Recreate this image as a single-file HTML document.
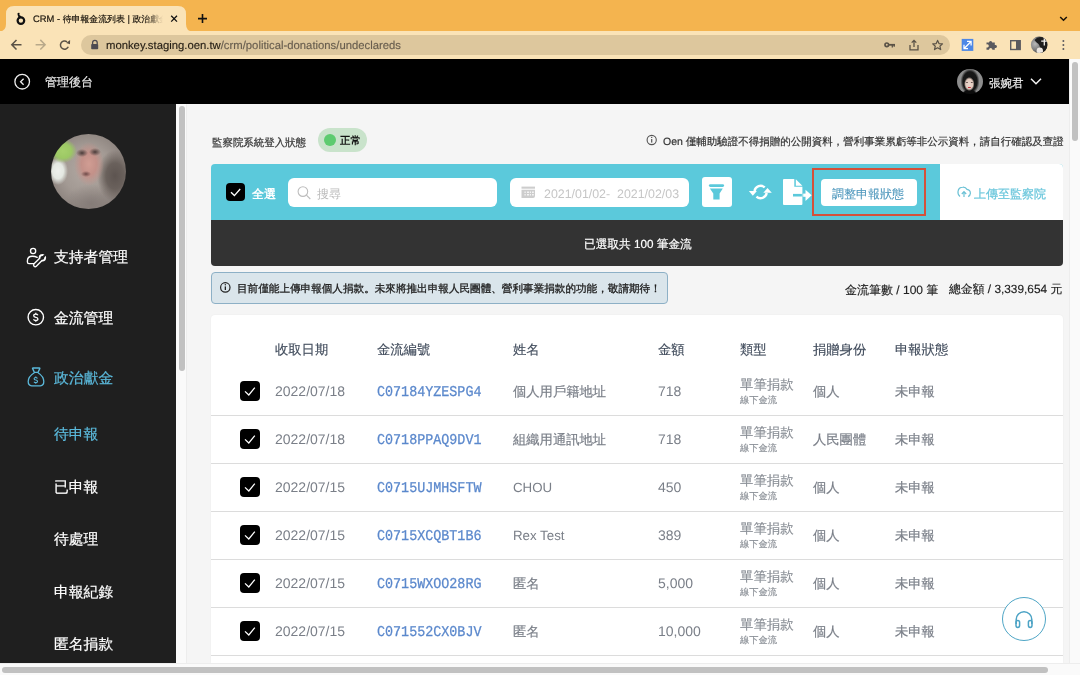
<!DOCTYPE html>
<html lang="zh-Hant"><head><meta charset="utf-8">
<style>
*{box-sizing:border-box;margin:0;padding:0}
html,body{width:1080px;height:675px;overflow:hidden;background:#fff;font-family:"Liberation Sans",sans-serif;text-rendering:geometricPrecision}
.t{will-change:transform}
.a{position:absolute}
.t{position:absolute;white-space:nowrap;line-height:1}
svg{position:absolute;overflow:visible}
</style></head><body>
<!-- browser chrome -->
<div class="a" style="left:0;top:0;width:1080px;height:31px;background:#F4B44F"></div>
<svg style="left:0;top:0" width="200" height="31"><path d="M-1 31.5 Q6 31.5 6 24 V14 Q6 6 14 6 H178 Q186 6 186 14 V24 Q186 31.5 193 31.5 Z" fill="#FAE3B7"/></svg>
<div class="a" style="left:0;top:31px;width:1080px;height:28px;background:#FAE3B7"></div>
<div class="a" id="tabtitle" style="-webkit-mask-image:linear-gradient(to right,#000 86%,transparent 100%);left:33px;top:13px;width:130px;height:16px;overflow:hidden;white-space:nowrap;font-size:9.4px;color:#1d170e;-webkit-text-stroke:0.2px #1d170e">CRM - <span style="font-size:8.9px">待申報金流列表</span> | <span style="font-size:8.9px">政治獻金</span></div>
<div class="a" style="left:81px;top:35px;width:869px;height:20px;background:#DDC79D;border-radius:10px"></div>
<div class="t" style="left:106px;top:41px;font-size:11.3px;color:#231d14;-webkit-text-stroke:0.15px currentColor">monkey.staging.oen.tw<span style="color:#675d4e">/crm/political-donations/undeclareds</span></div>
<!-- header -->
<div class="a" style="left:0;top:59px;width:1069px;height:45px;background:#000"></div>
<div class="t" style="left:45px;top:76px;font-size:12px;color:#e6e6e6;-webkit-text-stroke:0.2px #e6e6e6">管理後台</div>
<div class="t" style="left:988.5px;top:78.5px;font-size:11.5px;color:#f0f0f0;-webkit-text-stroke:0.2px #f0f0f0">張婉君</div>
<!-- sidebar -->
<div class="a" style="left:0;top:104px;width:176px;height:559px;background:#1F1F1F"></div>
<div class="t" style="left:54px;top:251px;font-size:14.8px;color:#fff;-webkit-text-stroke:0.2px currentColor">支持者管理</div>
<div class="t" style="left:54px;top:312px;font-size:14.8px;color:#fff;-webkit-text-stroke:0.2px currentColor">金流管理</div>
<div class="t" style="left:54px;top:372px;font-size:14.8px;color:#5BB9DB;-webkit-text-stroke:0.2px currentColor">政治獻金</div>
<div class="t" style="left:54px;top:427.5px;font-size:14.8px;color:#5BB9DB;-webkit-text-stroke:0.2px currentColor">待申報</div>
<div class="t" style="left:54px;top:480.5px;font-size:14.8px;color:#fff;-webkit-text-stroke:0.2px currentColor">已申報</div>
<div class="t" style="left:54px;top:532.5px;font-size:14.8px;color:#fff;-webkit-text-stroke:0.2px currentColor">待處理</div>
<div class="t" style="left:54px;top:585.5px;font-size:14.8px;color:#fff;-webkit-text-stroke:0.2px currentColor">申報紀錄</div>
<div class="t" style="left:54px;top:637.5px;font-size:14.8px;color:#fff;-webkit-text-stroke:0.2px currentColor">匿名捐款</div>
<!-- sidebar scrollbar -->
<div class="a" style="left:176px;top:104px;width:11px;height:559px;background:#FAFAFA;border-right:1px solid #EDEDED"></div>
<div class="a" style="left:179px;top:106px;width:6px;height:265px;background:#C1C1C1;border-radius:3px"></div>
<!-- content -->
<div class="a" style="left:187px;top:104px;width:882px;height:559px;background:#F5F5F5"></div>

<!-- status row -->
<div class="t" style="left:211.5px;top:138.5px;font-size:10.45px;color:#3a3a3a;-webkit-text-stroke:0.25px #3a3a3a">監察院系統登入狀態</div>
<div class="a" style="left:318px;top:128px;width:49px;height:24px;border-radius:12px;background:#C9E3CB"></div>
<div class="a" style="left:324px;top:134px;width:12px;height:12px;border-radius:50%;background:#5DCB6F"></div>
<div class="t" style="left:340px;top:136.5px;font-size:10.4px;font-weight:bold;color:#111">正常</div>
<div class="t" style="left:663px;top:136.5px;font-size:10.5px;color:#333;-webkit-text-stroke:0.2px #333">Oen 僅輔助驗證不得捐贈的公開資料，營利事業累虧等非公示資料，請自行確認及查證</div>
<!-- toolbar -->
<div class="a" style="left:211px;top:164px;width:852px;height:56px;background:#5BC9DB;border-radius:4px 4px 0 0"></div>
<div class="a" style="left:940px;top:164px;width:123px;height:56px;background:#fff;border-radius:0 4px 0 0"></div>
<div class="a" style="left:226.3px;top:183.1px;width:18.3px;height:18.3px;background:#000;border-radius:4px"></div>
<div class="t" style="left:252px;top:188px;font-size:12px;font-weight:bold;color:#fff">全選</div>
<div class="a" style="left:288px;top:178px;width:209px;height:29px;background:#fff;border-radius:6px"></div>
<div class="t" style="left:317px;top:188px;font-size:12px;color:#bbb">搜尋</div>
<div class="a" style="left:510px;top:178px;width:179px;height:29px;background:#fff;border-radius:6px"></div>
<div class="t" style="left:544px;top:188px;font-size:12.4px;color:#c6c6c6">2021/01/02-&nbsp;&nbsp;2021/02/03</div>
<div class="a" style="left:702px;top:177px;width:30px;height:30px;background:#fff;border-radius:3px"></div>
<div class="a" style="left:812px;top:168px;width:114px;height:47.5px;border:2px solid #D4503A"></div>
<div class="a" style="left:821px;top:179px;width:96px;height:27px;background:#fff;border-radius:4px"></div>
<div class="t" style="left:832px;top:188px;font-size:12px;color:#4F98BD;-webkit-text-stroke:0.12px #4F98BD">調整申報狀態</div>
<div class="t" style="left:974px;top:187.5px;font-size:12px;color:#6CC7DC;-webkit-text-stroke:0.25px #6CC7DC">上傳至監察院</div>
<!-- selection bar -->
<div class="a" style="left:211px;top:220px;width:852px;height:46px;background:#333;border-radius:0 0 4px 4px"></div>
<div class="t" style="left:584px;top:239px;font-size:11.7px;color:#fff;-webkit-text-stroke:0.2px #fff">已選取共 100 筆金流</div>
<!-- info -->
<div class="a" style="left:211px;top:272px;width:457px;height:32px;background:#DAE5EB;border:1px solid #8DB0C6;border-radius:4px"></div>
<div class="t" style="left:237px;top:284px;font-size:10.6px;color:#222;-webkit-text-stroke:0.3px #222">目前僅能上傳申報個人捐款。未來將推出申報人民團體、營利事業捐款的功能，敬請期待！</div>
<div class="t" style="left:845px;top:283.5px;font-size:12px;color:#222;-webkit-text-stroke:0.15px #222">金流筆數 / 100 筆</div>
<div class="t" style="left:949px;top:283.5px;font-size:11.85px;color:#222;-webkit-text-stroke:0.15px #222">總金額 / 3,339,654 元</div>
<!-- table -->
<div class="a" id="card" style="left:211px;top:315px;width:852px;height:348px;background:#fff;border-radius:4px 4px 0 0;box-shadow:0 0 2px rgba(0,0,0,0.05)"></div>
<div class="t" style="left:275px;top:342.5px;font-size:13.3px;color:#414C5C;-webkit-text-stroke:0.15px #414C5C">收取日期</div>
<div class="t" style="left:377px;top:342.5px;font-size:13.3px;color:#414C5C;-webkit-text-stroke:0.15px #414C5C">金流編號</div>
<div class="t" style="left:513px;top:342.5px;font-size:13.3px;color:#414C5C;-webkit-text-stroke:0.15px #414C5C">姓名</div>
<div class="t" style="left:658px;top:342.5px;font-size:13.3px;color:#414C5C;-webkit-text-stroke:0.15px #414C5C">金額</div>
<div class="t" style="left:740px;top:342.5px;font-size:13.3px;color:#414C5C;-webkit-text-stroke:0.15px #414C5C">類型</div>
<div class="t" style="left:813px;top:342.5px;font-size:13.3px;color:#414C5C;-webkit-text-stroke:0.15px #414C5C">捐贈身份</div>
<div class="t" style="left:895px;top:342.5px;font-size:13.3px;color:#414C5C;-webkit-text-stroke:0.15px #414C5C">申報狀態</div>
<div class="a" style="left:240px;top:381px;width:19.8px;height:19.8px;background:#000;border-radius:4px"></div>
<div class="t" style="left:275px;top:384px;font-size:14px;color:#7A7F88">2022/07/18</div>
<div class="t" style="left:377px;top:385.6px;font-size:13.4px;font-family:'Liberation Mono',monospace;color:#5B88CC;transform:scaleY(1.12);transform-origin:0 0;-webkit-text-stroke:0.25px #5B88CC">C07184YZESPG4</div>
<div class="t" style="left:513px;top:385.0px;font-size:13.3px;color:#7A7F88;-webkit-text-stroke:0.2px #7A7F88">個人用戶籍地址</div>
<div class="t" style="left:658px;top:384px;font-size:14px;color:#7A7F88">718</div>
<div class="t" style="left:740px;top:378.3px;font-size:13.4px;color:#8A8F96;-webkit-text-stroke:0.15px #8A8F96">單筆捐款</div>
<div class="t" style="left:740px;top:396px;font-size:9.25px;color:#8A8F96;-webkit-text-stroke:0.15px #8A8F96">線下金流</div>
<div class="t" style="left:813px;top:385.0px;font-size:13.3px;color:#7A7F88;-webkit-text-stroke:0.2px #7A7F88">個人</div>
<div class="t" style="left:895px;top:385.0px;font-size:13.3px;color:#7A7F88;-webkit-text-stroke:0.2px #7A7F88">未申報</div>
<div class="a" style="left:211px;top:415px;width:852px;height:1px;background:#DCDCDC"></div>
<div class="a" style="left:240px;top:429px;width:19.8px;height:19.8px;background:#000;border-radius:4px"></div>
<div class="t" style="left:275px;top:432px;font-size:14px;color:#7A7F88">2022/07/18</div>
<div class="t" style="left:377px;top:433.6px;font-size:13.4px;font-family:'Liberation Mono',monospace;color:#5B88CC;transform:scaleY(1.12);transform-origin:0 0;-webkit-text-stroke:0.25px #5B88CC">C0718PPAQ9DV1</div>
<div class="t" style="left:513px;top:433.0px;font-size:13.3px;color:#7A7F88;-webkit-text-stroke:0.2px #7A7F88">組織用通訊地址</div>
<div class="t" style="left:658px;top:432px;font-size:14px;color:#7A7F88">718</div>
<div class="t" style="left:740px;top:426.3px;font-size:13.4px;color:#8A8F96;-webkit-text-stroke:0.15px #8A8F96">單筆捐款</div>
<div class="t" style="left:740px;top:444px;font-size:9.25px;color:#8A8F96;-webkit-text-stroke:0.15px #8A8F96">線下金流</div>
<div class="t" style="left:813px;top:433.0px;font-size:13.3px;color:#7A7F88;-webkit-text-stroke:0.2px #7A7F88">人民團體</div>
<div class="t" style="left:895px;top:433.0px;font-size:13.3px;color:#7A7F88;-webkit-text-stroke:0.2px #7A7F88">未申報</div>
<div class="a" style="left:211px;top:463px;width:852px;height:1px;background:#DCDCDC"></div>
<div class="a" style="left:240px;top:477px;width:19.8px;height:19.8px;background:#000;border-radius:4px"></div>
<div class="t" style="left:275px;top:480px;font-size:14px;color:#7A7F88">2022/07/15</div>
<div class="t" style="left:377px;top:481.6px;font-size:13.4px;font-family:'Liberation Mono',monospace;color:#5B88CC;transform:scaleY(1.12);transform-origin:0 0;-webkit-text-stroke:0.25px #5B88CC">C0715UJMHSFTW</div>
<div class="t" style="left:513px;top:481.0px;font-size:13.3px;color:#7A7F88">CHOU</div>
<div class="t" style="left:658px;top:480px;font-size:14px;color:#7A7F88">450</div>
<div class="t" style="left:740px;top:474.3px;font-size:13.4px;color:#8A8F96;-webkit-text-stroke:0.15px #8A8F96">單筆捐款</div>
<div class="t" style="left:740px;top:492px;font-size:9.25px;color:#8A8F96;-webkit-text-stroke:0.15px #8A8F96">線下金流</div>
<div class="t" style="left:813px;top:481.0px;font-size:13.3px;color:#7A7F88;-webkit-text-stroke:0.2px #7A7F88">個人</div>
<div class="t" style="left:895px;top:481.0px;font-size:13.3px;color:#7A7F88;-webkit-text-stroke:0.2px #7A7F88">未申報</div>
<div class="a" style="left:211px;top:511px;width:852px;height:1px;background:#DCDCDC"></div>
<div class="a" style="left:240px;top:525px;width:19.8px;height:19.8px;background:#000;border-radius:4px"></div>
<div class="t" style="left:275px;top:528px;font-size:14px;color:#7A7F88">2022/07/15</div>
<div class="t" style="left:377px;top:529.6px;font-size:13.4px;font-family:'Liberation Mono',monospace;color:#5B88CC;transform:scaleY(1.12);transform-origin:0 0;-webkit-text-stroke:0.25px #5B88CC">C0715XCQBT1B6</div>
<div class="t" style="left:513px;top:529.0px;font-size:13.3px;color:#7A7F88">Rex Test</div>
<div class="t" style="left:658px;top:528px;font-size:14px;color:#7A7F88">389</div>
<div class="t" style="left:740px;top:522.3px;font-size:13.4px;color:#8A8F96;-webkit-text-stroke:0.15px #8A8F96">單筆捐款</div>
<div class="t" style="left:740px;top:540px;font-size:9.25px;color:#8A8F96;-webkit-text-stroke:0.15px #8A8F96">線下金流</div>
<div class="t" style="left:813px;top:529.0px;font-size:13.3px;color:#7A7F88;-webkit-text-stroke:0.2px #7A7F88">個人</div>
<div class="t" style="left:895px;top:529.0px;font-size:13.3px;color:#7A7F88;-webkit-text-stroke:0.2px #7A7F88">未申報</div>
<div class="a" style="left:211px;top:559px;width:852px;height:1px;background:#DCDCDC"></div>
<div class="a" style="left:240px;top:573px;width:19.8px;height:19.8px;background:#000;border-radius:4px"></div>
<div class="t" style="left:275px;top:576px;font-size:14px;color:#7A7F88">2022/07/15</div>
<div class="t" style="left:377px;top:577.6px;font-size:13.4px;font-family:'Liberation Mono',monospace;color:#5B88CC;transform:scaleY(1.12);transform-origin:0 0;-webkit-text-stroke:0.25px #5B88CC">C0715WXOO28RG</div>
<div class="t" style="left:513px;top:577.0px;font-size:13.3px;color:#7A7F88;-webkit-text-stroke:0.2px #7A7F88">匿名</div>
<div class="t" style="left:658px;top:576px;font-size:14px;color:#7A7F88">5,000</div>
<div class="t" style="left:740px;top:570.3px;font-size:13.4px;color:#8A8F96;-webkit-text-stroke:0.15px #8A8F96">單筆捐款</div>
<div class="t" style="left:740px;top:588px;font-size:9.25px;color:#8A8F96;-webkit-text-stroke:0.15px #8A8F96">線下金流</div>
<div class="t" style="left:813px;top:577.0px;font-size:13.3px;color:#7A7F88;-webkit-text-stroke:0.2px #7A7F88">個人</div>
<div class="t" style="left:895px;top:577.0px;font-size:13.3px;color:#7A7F88;-webkit-text-stroke:0.2px #7A7F88">未申報</div>
<div class="a" style="left:211px;top:607px;width:852px;height:1px;background:#DCDCDC"></div>
<div class="a" style="left:240px;top:621px;width:19.8px;height:19.8px;background:#000;border-radius:4px"></div>
<div class="t" style="left:275px;top:624px;font-size:14px;color:#7A7F88">2022/07/15</div>
<div class="t" style="left:377px;top:625.6px;font-size:13.4px;font-family:'Liberation Mono',monospace;color:#5B88CC;transform:scaleY(1.12);transform-origin:0 0;-webkit-text-stroke:0.25px #5B88CC">C071552CX0BJV</div>
<div class="t" style="left:513px;top:625.0px;font-size:13.3px;color:#7A7F88;-webkit-text-stroke:0.2px #7A7F88">匿名</div>
<div class="t" style="left:658px;top:624px;font-size:14px;color:#7A7F88">10,000</div>
<div class="t" style="left:740px;top:618.3px;font-size:13.4px;color:#8A8F96;-webkit-text-stroke:0.15px #8A8F96">單筆捐款</div>
<div class="t" style="left:740px;top:636px;font-size:9.25px;color:#8A8F96;-webkit-text-stroke:0.15px #8A8F96">線下金流</div>
<div class="t" style="left:813px;top:625.0px;font-size:13.3px;color:#7A7F88;-webkit-text-stroke:0.2px #7A7F88">個人</div>
<div class="t" style="left:895px;top:625.0px;font-size:13.3px;color:#7A7F88;-webkit-text-stroke:0.2px #7A7F88">未申報</div>
<div class="a" style="left:211px;top:655px;width:852px;height:1px;background:#DCDCDC"></div>
<div class="a" style="left:1002px;top:597px;width:44px;height:44px;border-radius:50%;border:1.7px solid #4FA6C6;background:#fff"></div>

<!-- chrome icons -->
<svg style="left:0;top:0" width="1080" height="59">
 <!-- favicon -->
 <circle cx="20.9" cy="20.6" r="3.3" fill="none" stroke="#111" stroke-width="2.2"/>
 <path d="M17.4 13.6 Q18.2 12.4 19.6 12.9 L19.4 15 Q20.6 15.8 21.6 16.6 L19.2 18.2 Q17.6 16.6 17.4 13.6 Z" fill="#111"/>
 <!-- close X -->
 <path d="M171.2 15.8 L177 21.6 M177 15.8 L171.2 21.6" stroke="#111" stroke-width="1.3"/>
 <!-- plus -->
 <path d="M198 18.6 H207 M202.5 14.1 V23" stroke="#111" stroke-width="1.6"/>
 <!-- tab chevron -->
 <path d="M1060.2 17 L1063.5 20.3 L1066.8 17" fill="none" stroke="#1a1208" stroke-width="1.5"/>
 <!-- back -->
 <path d="M12 44.7 H21.5 M16.5 39.9 L11.8 44.7 L16.5 49.5" fill="none" stroke="#5a5246" stroke-width="1.5"/>
 <!-- forward -->
 <path d="M35.6 44.7 H45 M40.3 39.9 L45.1 44.7 L40.3 49.5" fill="none" stroke="#b8a98a" stroke-width="1.5"/>
 <!-- reload -->
 <path d="M67 41.8 A4.1 4.1 0 1 0 68.3 46.8" fill="none" stroke="#5a5246" stroke-width="1.5"/>
 <path d="M66.2 42.9 L70.1 40 L70 44.3 Z" fill="#5a5246"/>
 <!-- lock -->
 <path d="M92.6 44.2 V42.6 A2.3 2.3 0 0 1 97.2 42.6 V44.2" fill="none" stroke="#4d4b52" stroke-width="1.3"/>
 <rect x="91.2" y="44" width="7" height="5.2" rx="0.8" fill="#4d4b52"/>
 <!-- key -->
 <circle cx="886.8" cy="44.8" r="1.8" fill="none" stroke="#5a5246" stroke-width="1.7"/>
 <path d="M888.5 44.8 H895" stroke="#5a5246" stroke-width="1.8"/>
 <path d="M892.3 45 V47.4 M894.2 45 V46.8" stroke="#5a5246" stroke-width="1.3"/>
 <!-- share -->
 <path d="M910 45 V49.8 H918 V45" fill="none" stroke="#5a5246" stroke-width="1.3"/>
 <path d="M914 47 V40.5 M911.7 42.6 L914 40.3 L916.3 42.6" fill="none" stroke="#5a5246" stroke-width="1.3"/>
 <!-- star -->
 <path d="M937.6 40.4 L939 43.6 L942.5 43.9 L939.9 46.2 L940.7 49.6 L937.6 47.8 L934.5 49.6 L935.3 46.2 L932.7 43.9 L936.2 43.6 Z" fill="none" stroke="#5a5246" stroke-width="1.2" stroke-linejoin="round"/>
 <!-- blue ext -->
 <rect x="961.7" y="38.9" width="11.6" height="12" fill="#4C87E6"/>
 <path d="M964.2 48.5 L971 41.5 M964 44.8 V48.7 H968 M967 41.3 H971.1 V45.4" fill="none" stroke="#fff" stroke-width="1.25"/>
 <!-- puzzle -->
 <path d="M986.5 42.5 H989 A1.6 1.6 0 1 1 992.2 42.5 H994.8 V45 A1.6 1.6 0 1 1 994.8 48 V49.8 H992.4 A1.6 1.6 0 1 0 989 49.8 H986.5 V47.4 A1.6 1.6 0 1 0 986.5 44.5 Z" fill="#5b5a5e"/>
 <!-- sidebar icon -->
 <rect x="1010.7" y="40.7" width="9.5" height="8.8" fill="none" stroke="#5b5a5e" stroke-width="1.4"/>
 <rect x="1016" y="40.7" width="4.2" height="8.8" fill="#5b5a5e"/>
 <!-- profile avatar -->
 <defs><radialGradient id="pa1" cx="0.25" cy="0.45" r="0.6"><stop offset="0" stop-color="#b8b8b8"/><stop offset="0.6" stop-color="#7a7a7a"/><stop offset="1" stop-color="#3a3a3a"/></radialGradient>
 <clipPath id="pac"><circle cx="1039.2" cy="44.8" r="8.3"/></clipPath></defs>
 <circle cx="1039.2" cy="44.8" r="8.3" fill="url(#pa1)"/>
 <g clip-path="url(#pac)">
  <path d="M1034.5 40 Q1038 36 1043 37.5 Q1048 40 1047.5 46 Q1047 51 1044 53 L1040 53 Q1041 47 1038.5 44 Q1036 42.5 1034.5 40 Z" fill="#1e1e1e"/>
  <ellipse cx="1039.8" cy="50.8" rx="3.2" ry="3.4" fill="#ebe6e0"/>
  <path d="M1044.3 38.2 V45.5 M1041.2 41.2 H1047.4" stroke="#f2f0ec" stroke-width="1.3"/>
 </g>
 <!-- dots -->
 <circle cx="1063.4" cy="41" r="1" fill="#5b5a5e"/><circle cx="1063.4" cy="45" r="1" fill="#5b5a5e"/><circle cx="1063.4" cy="49" r="1" fill="#5b5a5e"/>
</svg>
<!-- header icons -->
<svg style="left:0;top:59px" width="1069" height="45">
 <circle cx="22.2" cy="22.7" r="7.3" fill="none" stroke="#eee" stroke-width="1.3"/>
 <path d="M23.6 19.7 L20.6 22.7 L23.6 25.7" fill="none" stroke="#eee" stroke-width="1.3"/>
 <path d="M1031 19.8 L1036 24.8 L1041 19.8" fill="none" stroke="#f2f2f2" stroke-width="1.5"/>
</svg>
<div class="a" style="left:957px;top:68.8px;width:25.6px;height:25.6px;border-radius:50%;overflow:hidden;background:
radial-gradient(ellipse 1.6px 0.9px at 12.4px 18.6px,#c0303a 0%,#c0303a 60%,rgba(192,48,58,0) 100%),
radial-gradient(ellipse 1.4px 0.8px at 10px 13.6px,#3a2a2a 0%,rgba(58,42,42,0) 100%),
radial-gradient(ellipse 1.4px 0.8px at 14.8px 13.6px,#3a2a2a 0%,rgba(58,42,42,0) 100%),
radial-gradient(ellipse 5.2px 7px at 12.3px 15px,#ead6cc 0%,#e2cabe 70%,rgba(226,202,190,0) 100%),
radial-gradient(ellipse 8px 6px at 12.6px 26px,#0c0c0c 0%,#0c0c0c 80%,rgba(12,12,12,0) 100%),
radial-gradient(ellipse 9.5px 13px at 13px 12.5px,#141414 0%,#181818 75%,rgba(24,24,24,0) 100%),
#8d8d8d"></div>
<!-- sidebar icons -->
<svg style="left:0;top:104px" width="176" height="300">
 <g fill="none" stroke="#fff" stroke-width="1.35" stroke-linejoin="round" stroke-linecap="round">
  <circle cx="33.1" cy="147" r="2.6"/>
  <path d="M34.2 159.6 H29 Q27.4 159.6 27.4 158 V157 Q27.4 152.2 32.4 152.2 Q35.2 152.2 37.2 153.4"/>
 </g>
 <path d="M35.2 161 L41.6 154.6" stroke="#fff" stroke-width="4.6" stroke-linecap="round"/>
 <circle cx="42.4" cy="153.8" r="3.7" fill="#fff"/>
 <path d="M35.2 161 L41.6 154.6" stroke="#1F1F1F" stroke-width="1.8" stroke-linecap="round"/>
 <circle cx="42.4" cy="153.8" r="1.9" fill="#1F1F1F"/>
 <path d="M42.4 153.8 L46.4 149.8" stroke="#1F1F1F" stroke-width="2"/>
 <g fill="none" stroke="#fff" stroke-width="1.4">
  <circle cx="35.8" cy="213.2" r="7.7"/>
 </g>
 <path d="M37.9 211.2 Q37.3 210.1 35.8 210.1 Q33.7 210.1 33.7 211.8 Q33.7 213.1 35.8 213.3 Q37.9 213.5 37.9 215 Q37.9 216.5 35.8 216.5 Q34.1 216.5 33.5 215.3 M35.8 208.8 V210.1 M35.8 216.5 V217.8" fill="none" stroke="#fff" stroke-width="1.3"/>
 <g fill="none" stroke="#5BB9DB" stroke-width="1.3" stroke-linejoin="round">
  <path d="M32.6 264.6 Q32.2 264 33 264 H39.4 Q40.2 264 39.8 264.6 L38 268.4 H34.4 Z"/>
  <path d="M34.4 268.8 Q28.2 272.6 28.2 277.6 Q28.2 281.6 31.6 281.8 H40.4 Q43.8 281.6 43.8 277.6 Q43.8 272.6 38 268.8"/>
 </g>
 <path d="M37.4 274.4 Q36.9 273.5 35.8 273.5 Q34.1 273.5 34.1 274.8 Q34.1 275.8 35.8 276 Q37.5 276.2 37.5 277.4 Q37.5 278.6 35.8 278.6 Q34.5 278.6 34 277.7 M35.8 272.4 V273.5 M35.8 278.6 V279.7" fill="none" stroke="#5BB9DB" stroke-width="1.1"/>
</svg>
<!-- monkey avatar -->
<div class="a" style="left:50.5px;top:133.8px;width:75.5px;height:75.5px;border-radius:50%;overflow:hidden;background:
radial-gradient(ellipse 6px 4px at 31px 19px,#4a3c3a 0%,rgba(74,60,58,0) 100%),
radial-gradient(ellipse 6px 4px at 44px 18px,#4a3c3a 0%,rgba(74,60,58,0) 100%),
radial-gradient(ellipse 5px 3px at 35px 40px,#6e4a48 0%,rgba(110,74,72,0) 100%),
radial-gradient(ellipse 15px 22px at 38px 30px,#d19d93 0%,#c39189 50%,rgba(190,150,140,0) 100%),
radial-gradient(ellipse 14px 12px at 12px 17px,#a6d06c 0%,#9cc864 60%,rgba(156,200,100,0) 100%),
radial-gradient(ellipse 10px 14px at 7px 37px,#eef0ec 0%,#e4e8e2 55%,rgba(228,232,226,0) 100%),
radial-gradient(ellipse 18px 26px at 64px 42px,#5d5450 0%,#6a615c 50%,rgba(106,97,92,0) 100%),
radial-gradient(ellipse 26px 20px at 40px 70px,#857c78 0%,rgba(133,124,120,0) 100%),
radial-gradient(ellipse 40px 40px at 36px 36px,#b2a9a3 0%,#a39a94 60%,#8c837e 100%)"></div>
<!-- toolbar icons -->
<svg style="left:0;top:0" width="1080" height="675">
 <path d="M231 192.2 L234.4 195.6 L240.2 189" fill="none" stroke="#fff" stroke-width="1.35"/>
 <circle cx="302.9" cy="191.6" r="4.8" fill="none" stroke="#bdbdbd" stroke-width="1.1"/>
 <path d="M306.4 195.1 L310.3 199" stroke="#bdbdbd" stroke-width="1.1"/>
 <rect x="521.5" y="186.6" width="13.5" height="2.1" fill="#cdcdcd"/>
 <path d="M521.5 189.8 H535 V196 Q535 198 533 198 H521.5 Z" fill="#cdcdcd"/>
 <g fill="#fff"><rect x="524.5" y="191.6" width="1.2" height="1.2"/><rect x="527" y="191.6" width="2" height="1.2"/><rect x="529.8" y="191.6" width="1.2" height="1.2"/><rect x="532" y="191.6" width="1.8" height="1.2"/>
 <rect x="524.5" y="194.2" width="1.2" height="1.2"/><rect x="527" y="194.2" width="2" height="1.2"/><rect x="529.8" y="194.2" width="1.2" height="1.2"/><rect x="532" y="194.2" width="1.8" height="1.2"/></g>
 <!-- funnel -->
 <rect x="708.9" y="184.2" width="15.2" height="2.8" rx="1.4" fill="#5BC9DB"/>
 <path d="M709.9 188.6 H722.8 L719.6 193.4 V199.4 H713.3 V193.4 Z" fill="#5BC9DB"/>
 <!-- refresh -->
 <g fill="none" stroke="#fff" stroke-width="2.4">
  <path d="M764.75 187.39 A6.2 6.2 0 0 0 754.49 190.92"/>
  <path d="M756.45 196.61 A6.2 6.2 0 0 0 766.71 193.08"/>
 </g>
 <path d="M748.9 191.1 L756.9 191.1 L752.8 195.8 Z" fill="#fff"/>
 <path d="M763.3 192.8 L771.8 192.8 L767.5 188 Z" fill="#fff"/>
 <!-- export -->
 <path d="M784 179 H794.3 V186.8 H802.4 V204 Q802.4 205 801.4 205 H784 Q783 205 783 204 V180 Q783 179 784 179 Z" fill="#fff"/>
 <path d="M795.8 179.2 L802.4 185.8 H795.8 Z" fill="#fff"/>
 <rect x="793" y="193.9" width="8.9" height="2.6" fill="#5BC9DB"/>
 <rect x="803.2" y="193.6" width="3.4" height="3.2" fill="#fff"/>
 <path d="M805.5 189.8 L811.7 195.3 L805.5 200.9 Z" fill="#fff"/>
 <!-- cloud -->
 <path d="M960 196.4 Q957.6 194.6 958 191.6 Q958.6 187.4 962.8 187.2 Q965.6 187 967 189.4 Q970.4 190 970.4 193.4 Q970.2 195.6 968.2 196.6" fill="none" stroke="#6BC1D5" stroke-width="1.2"/>
 <path d="M964 197 V191.8 M961.8 194 L964 191.6 L966.2 194" fill="none" stroke="#6BC1D5" stroke-width="1.2"/>
 <!-- oen info -->
 <circle cx="651.7" cy="140" r="4.6" fill="none" stroke="#555" stroke-width="1.1"/>
 <rect x="651.1" y="139" width="1.2" height="3.6" fill="#555"/><circle cx="651.7" cy="137.4" r="0.7" fill="#555"/>
 <!-- info box icon -->
 <circle cx="225.3" cy="287.4" r="4.7" fill="none" stroke="#222" stroke-width="1.2"/>
 <rect x="224.7" y="286.4" width="1.3" height="3.6" fill="#222"/><circle cx="225.3" cy="284.8" r="0.7" fill="#222"/>
 <!-- headset -->
 <g fill="none" stroke="#4CA3C5" stroke-width="1.5">
  <path d="M1016.2 624 V619.6 A7.8 7.8 0 0 1 1031.8 619.6 V624"/>
  <rect x="1016" y="620.4" width="3.6" height="7" rx="1.8"/>
  <rect x="1028.4" y="620.4" width="3.6" height="7" rx="1.8"/>
 </g>
 <path d="M245 391.4 L248.8 395.0 L254.8 387.7" fill="none" stroke="#fff" stroke-width="1.25"/>
 <path d="M245 439.4 L248.8 443.0 L254.8 435.7" fill="none" stroke="#fff" stroke-width="1.25"/>
 <path d="M245 487.4 L248.8 491.0 L254.8 483.7" fill="none" stroke="#fff" stroke-width="1.25"/>
 <path d="M245 535.4 L248.8 539.0 L254.8 531.7" fill="none" stroke="#fff" stroke-width="1.25"/>
 <path d="M245 583.4 L248.8 587.0 L254.8 579.7" fill="none" stroke="#fff" stroke-width="1.25"/>
 <path d="M245 631.4 L248.8 635.0 L254.8 627.7" fill="none" stroke="#fff" stroke-width="1.25"/>
</svg>
<!-- right scrollbar -->
<div class="a" style="left:1069px;top:59px;width:11px;height:604px;background:#FAFAFA;border-left:1px solid #EDEDED"></div>
<div class="a" style="left:1072px;top:62px;width:6px;height:79px;background:#C1C1C1;border-radius:3px"></div>
<!-- bottom scrollbar -->
<div class="a" style="left:0;top:663px;width:1080px;height:12px;background:#FAFAFA;border-top:1px solid #EDEDED"></div>
<div class="a" style="left:2px;top:667px;width:1046px;height:6px;background:#C1C1C1;border-radius:3px"></div>
</body></html>
